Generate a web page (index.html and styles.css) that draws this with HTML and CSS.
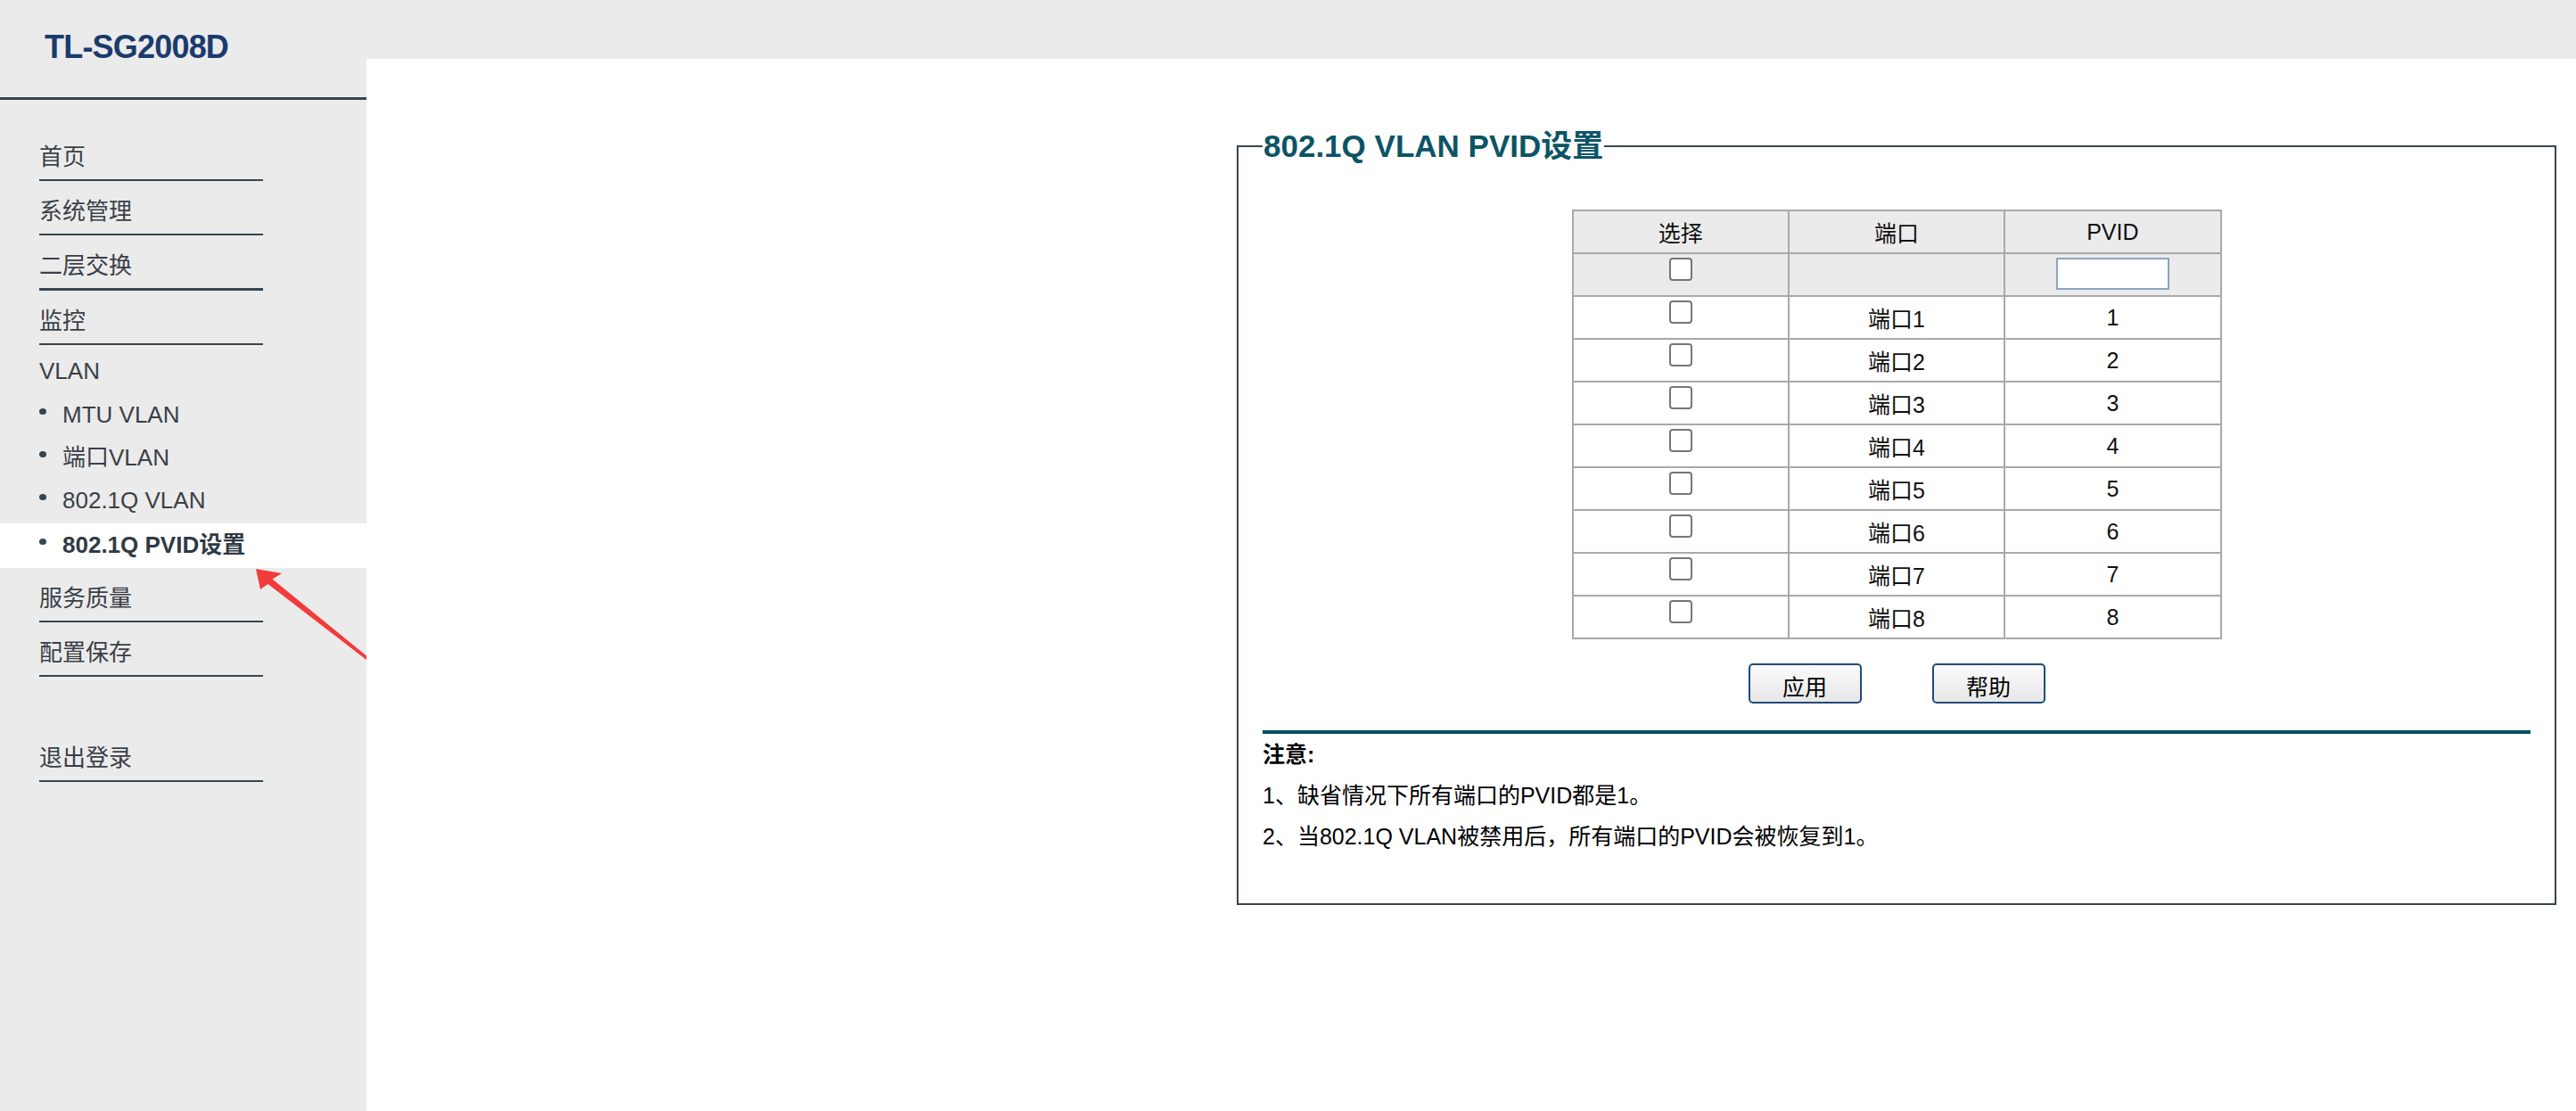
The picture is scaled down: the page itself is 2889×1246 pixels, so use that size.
FILE: index.html
```html
<!DOCTYPE html>
<html lang="zh-CN">
<head>
<meta charset="utf-8">
<title>TL-SG2008D</title>
<link rel="stylesheet" href="styles.css">
</head>
<body>
<div class="layout">
  <aside class="sidebar">
    <div class="brand">TL-SG2008D</div>
    <nav class="menu">
      <a class="item">首页</a>
      <a class="item">系统管理</a>
      <a class="item thick">二层交换</a>
      <a class="item">监控</a>
      <div class="item group">VLAN</div>
      <a class="sub">MTU VLAN</a>
      <a class="sub">端口VLAN</a>
      <a class="sub">802.1Q VLAN</a>
      <a class="sub active">802.1Q PVID设置</a>
      <a class="item">服务质量</a>
      <a class="item">配置保存</a>
      <a class="item logout">退出登录</a>
    </nav>
  </aside>
  <main class="content">
    <fieldset class="panel">
      <legend>802.1Q VLAN PVID设置</legend>
      <table class="pvid">
        <tr class="head">
          <td>选择</td><td>端口</td><td>PVID</td>
        </tr>
        <tr class="head">
          <td class="chk"><input type="checkbox"></td><td></td><td class="chk"><input type="text" class="pvid-input"></td>
        </tr>
        <tr><td class="chk"><input type="checkbox"></td><td>端口1</td><td>1</td></tr>
        <tr><td class="chk"><input type="checkbox"></td><td>端口2</td><td>2</td></tr>
        <tr><td class="chk"><input type="checkbox"></td><td>端口3</td><td>3</td></tr>
        <tr><td class="chk"><input type="checkbox"></td><td>端口4</td><td>4</td></tr>
        <tr><td class="chk"><input type="checkbox"></td><td>端口5</td><td>5</td></tr>
        <tr><td class="chk"><input type="checkbox"></td><td>端口6</td><td>6</td></tr>
        <tr><td class="chk"><input type="checkbox"></td><td>端口7</td><td>7</td></tr>
        <tr><td class="chk"><input type="checkbox"></td><td>端口8</td><td>8</td></tr>
      </table>
      <div class="actions">
        <button class="btn">应用</button>
        <button class="btn">帮助</button>
      </div>
      <div class="rule"></div>
      <div class="notes">
        <div class="note-title">注意:</div>
        <div class="note">1、缺省情况下所有端口的PVID都是1。</div>
        <div class="note">2、当802.1Q VLAN被禁用后，所有端口的PVID会被恢复到1。</div>
      </div>
    </fieldset>
  </main>
</div>
<svg class="arrow" width="131" height="112" viewBox="0 0 131 112">
  <polygon points="7,8 36,13 25.5,19.5 131,105.5 131,110 20.5,25 12,31" fill="#f23b3b"/>
</svg>
</body>
</html>
```

FILE: styles.css
```css
html, body {
  margin: 0;
  padding: 0;
}

body {
  background: #ebebeb;
  font-family: "Liberation Sans", Arial, "Noto Sans CJK SC", sans-serif;
  color: #111;
  position: relative;
  min-height: 1246px;
}

.layout {
  display: grid;
  grid-template-columns: 411px 1fr;
  min-height: 1246px;
}

/* ---------- Sidebar ---------- */
.sidebar {
  background: #ebebeb;
}

.brand {
  font-size: 36px;
  font-weight: bold;
  letter-spacing: -0.8px;
  line-height: 40px;
  color: #1b3b6d;
  padding: 33px 0 36px 50px;
  border-bottom: 3px solid #36454f;
}

.menu {
  display: flex;
  flex-direction: column;
  margin-top: 30px;
  font-size: 26px;
  line-height: 36px;
  color: #3a4047;
}

.item {
  display: block;
  width: 251px;
  margin-left: 44px;
  padding: 16px 0 7px;
  border-bottom: 2px solid #36454f;
}

.item.thick {
  border-bottom-width: 3px;
}

.item.group {
  border-bottom: none;
  padding-top: 11px;
}

.item.logout {
  margin-top: 57px;
}

.sub {
  display: flex;
  align-items: center;
  gap: 18px;
  padding: 6px 0 6px 44px;
}

.sub::before {
  content: "";
  width: 8px;
  height: 7px;
  border-radius: 50%;
  background: #36454f;
  margin-top: -7px;
}

.sub.active {
  background: #ffffff;
  font-weight: bold;
  color: #2f3a44;
  margin-top: 2px;
  padding: 6px 0 8px 44px;
}

/* ---------- Content ---------- */
.content {
  background: #ffffff;
  margin-top: 66px;
}

.panel {
  box-sizing: border-box;
  width: 1480px;
  margin: 78px 22px 0 auto;
  border: 2px solid #36454f;
  padding: 0 27px 52px;
  min-width: 0;
}

.panel legend {
  font-size: 35px;
  font-weight: bold;
  line-height: 40px;
  color: #0c5465;
  padding: 0 1px;
}

.pvid {
  margin: 51px auto 0;
  width: 729px;
  border-collapse: separate;
  border-spacing: 0;
  border-top: 2px solid #a9a9a9;
  border-left: 2px solid #a9a9a9;
  font-size: 25px;
  color: #111;
  table-layout: fixed;
}

.pvid td {
  border-right: 2px solid #a9a9a9;
  border-bottom: 2px solid #a9a9a9;
  height: 46px;
  padding: 0;
  text-align: center;
  vertical-align: middle;
}

.pvid tr.head td {
  background: #ebebeb;
}

.pvid td.chk {
  vertical-align: top;
}

.pvid input[type="checkbox"] {
  appearance: none;
  -webkit-appearance: none;
  box-sizing: border-box;
  display: block;
  width: 26px;
  height: 26px;
  margin: 4px auto 0;
  border: 2px solid #767676;
  border-radius: 4px;
  background: #ffffff;
}

.pvid-input {
  box-sizing: border-box;
  display: block;
  width: 127px;
  height: 36px;
  margin: 4px auto 0;
  border: 2px solid #8ba5c1;
  background: #ffffff;
  padding: 0;
}

.actions {
  display: flex;
  justify-content: center;
  gap: 79px;
  margin-top: 27px;
}

.btn {
  box-sizing: border-box;
  width: 127px;
  height: 45px;
  border: 2px solid #1f4c78;
  border-radius: 5px;
  background: linear-gradient(#fbfbfb, #e7e7e7);
  font-family: "Liberation Sans", Arial, "Noto Sans CJK SC", sans-serif;
  font-size: 25px;
  color: #000;
  padding: 4px 0 0;
}

.rule {
  height: 4px;
  background: #00525f;
  margin-top: 30px;
}

.notes {
  font-size: 25px;
  line-height: 46px;
  color: #000;
}

.note-title {
  font-weight: bold;
}

/* annotation arrow */
.arrow {
  position: absolute;
  left: 280px;
  top: 630px;
}
```
